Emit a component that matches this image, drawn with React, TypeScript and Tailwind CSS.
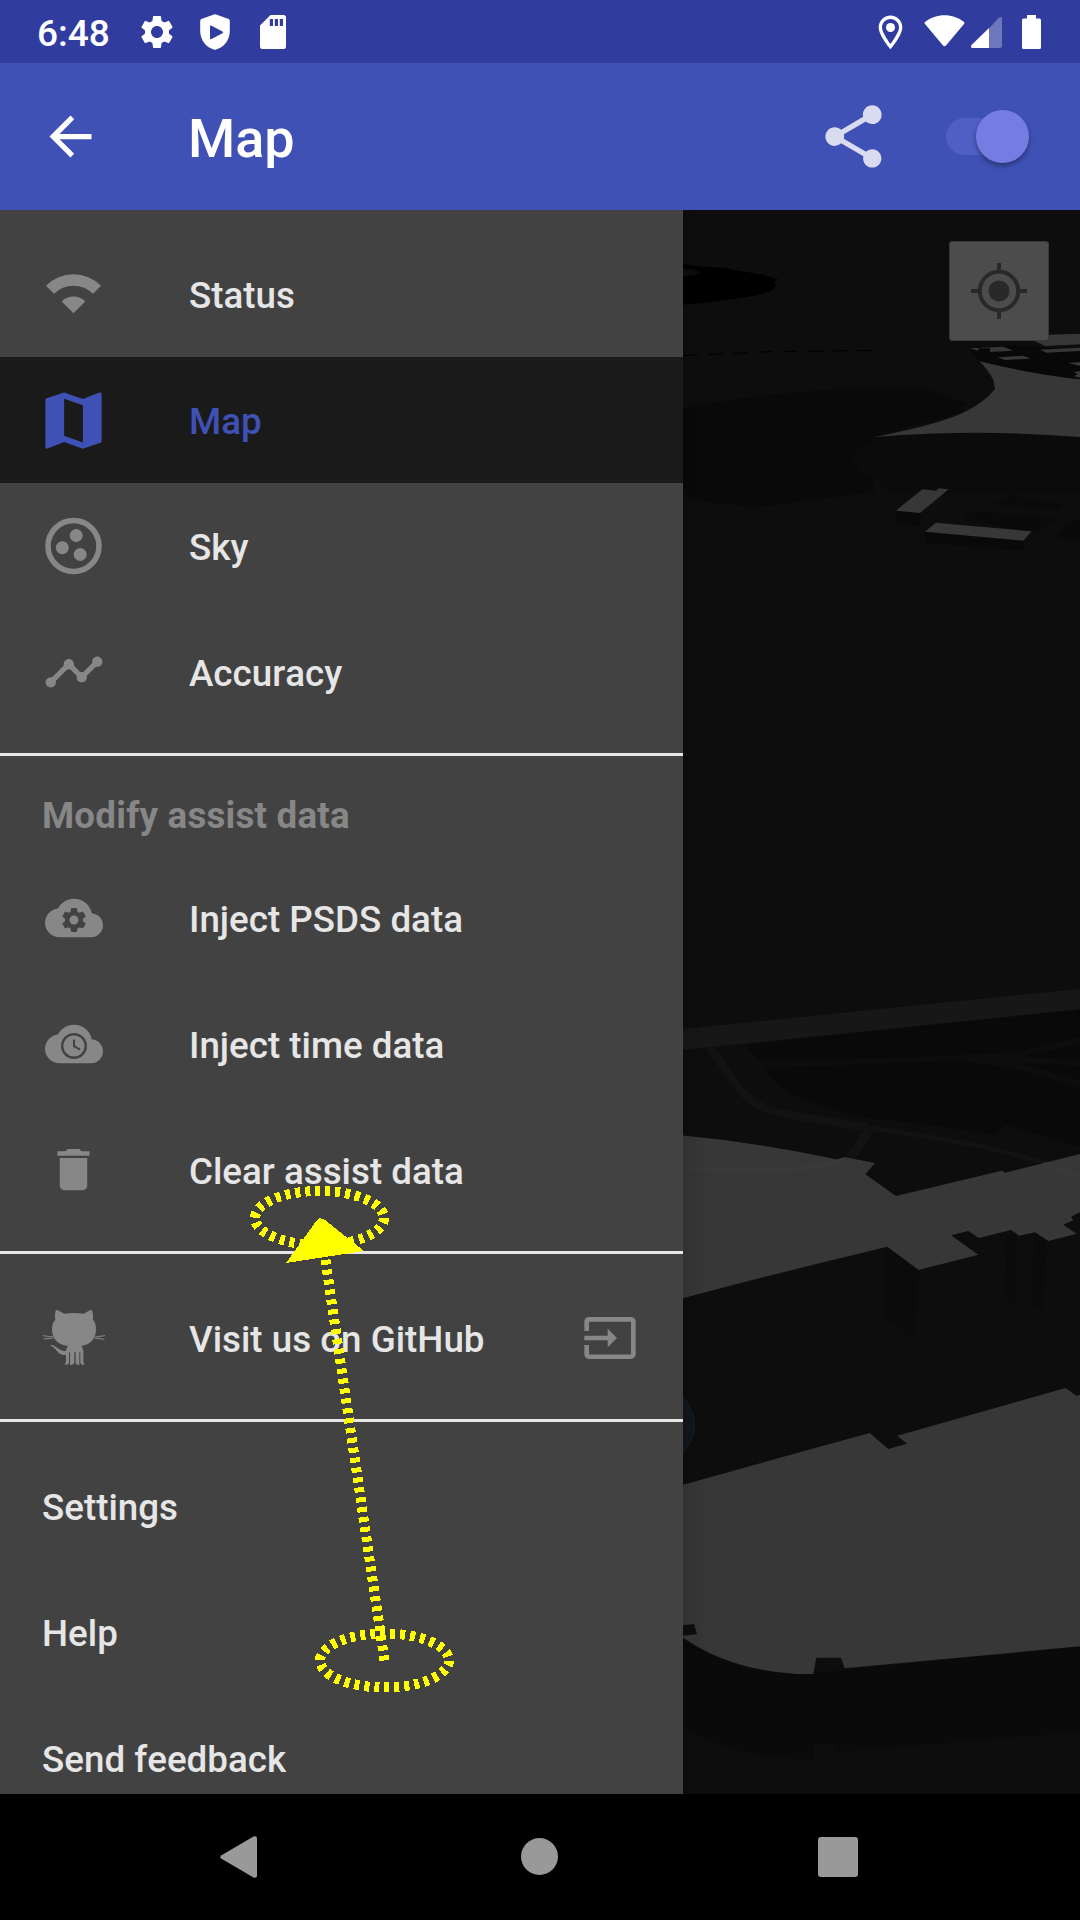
import React from "react";
import { MdArrowBack, MdCloud, MdDelete, MdMap, MdSettings, MdShare, MdTimeline } from "react-icons/md";

function ShieldPlay() {
  return (
    <svg width="30" height="36" viewBox="0 0 30 36" className="fill-white">
      <path
        fillRule="evenodd"
        d="M13.9 .4Q15 -.1 16.100 .4L28.600 5Q29.800 5.500 29.800 7V17C29.800 27 23 33.500 16.200 35.600Q15 36 13.800 35.600C7 33.500 .2 27 .2 17V7Q.2 5.500 1.400 5ZM10 12.200V24.500Q10.300 25.600 11.600 25L22.500 19.200Q23.700 18.300 22.500 17.400L11.600 11.700Q10.300 11.100 10 12.200Z"
      />
    </svg>
  );
}

function SdCard() {
  return (
    <svg width="26" height="34" viewBox="0 0 26 34" className="fill-white">
      <path fillRule="evenodd" d="M10.500 0H23.500Q26 0 26 2.500V31.500Q26 34 23.500 34H2.500Q0 34 0 31.500V10.500ZM9.800 4V11H13V4ZM14.800 4V11H18V4ZM19.800 4V11H23V4Z" />
    </svg>
  );
}

function StatusBar() {
  return (
    <div className="flex h-[63px] shrink-0 items-center bg-[#303d9f] pl-[37px] text-white">
      <span className="w-[100px] pt-[3px] text-[37px] leading-none font-medium">6:48</span>
      <MdSettings className="size-[40px] shrink-0" />
      <span className="ml-[23px]"><ShieldPlay /></span>
      <span className="ml-[30px]"><SdCard /></span>
      <svg width="164" height="36" viewBox="878 13 164 36" className="ml-auto mr-[38px] fill-white">
        <path fillRule="evenodd" d="M890.500 14.600C884 14.600 878.700 19.800 878.700 26.300C878.700 35 890.500 48.300 890.500 48.300S902.300 35 902.300 26.300C902.300 19.800 897 14.600 890.500 14.600ZM890.500 18C895.300 18 899 21.700 899 26.500C899 31.500 890.500 43 890.500 43S882 31.500 882 26.500C882 21.700 885.700 18 890.500 18Z" />
        <circle cx="890.500" cy="26.500" r="4.500" />
        <path d="M924.800 22.800Q924.200 21.700 925 21C936 12 953 12 964 21Q964.800 21.700 964.200 22.800L946 44.600Q944.500 46 943 44.600Z" />
        <path fillOpacity=".3" d="M989 27.500L998.500 17Q1002 14.500 1002 18V45Q1002 47 1000 47H989Z" />
        <path d="M989 27V47H971.500Q970.500 45 971.500 44Z" />
        <path d="M1027 14H1036V17.600H1039.500Q1041 17.600 1041 19.200V46.500Q1041 48 1039.500 48H1023.500Q1022 48 1022 46.500V19.200Q1022 17.600 1023.500 17.600H1027Z" />
      </svg>
    </div>
  );
}

function AppBar() {
  return (
    <header className="flex h-[147px] shrink-0 items-center bg-[#3f51b5] pl-[39px] pr-[51px] text-white">
      <MdArrowBack className="size-[63px] shrink-0" />
      <h1 className="ml-[86px] pt-[5px] text-[54px] leading-none font-medium">Map</h1>
      <MdShare className="ml-auto size-[75px] text-[#d9dcf0]" />
      <div className="ml-[55px] flex h-[37px] w-[83px] items-center justify-end rounded-full bg-[#4f5fc4]">
        <div className="size-[53px] shrink-0 rounded-full bg-[#757de3] shadow-[0_3px_5px_rgba(0,0,0,0.35)]" />
      </div>
    </header>
  );
}

function SignalIcon() {
  return (
    <svg width="63" height="63" className="fill-current">
      <path d="M4 22.700A38.900 38.900 0 0 1 59 22.700L51 30.700A27.600 27.600 0 0 0 12 30.700Z" />
      <path d="M31.500 50.200L19.700 38.400A16.700 16.700 0 0 1 43.300 38.400Z" />
    </svg>
  );
}

function SkyIcon() {
  return (
    <svg width="63" height="63" className="fill-current">
      <circle cx="31.500" cy="31" r="25.500" fill="none" stroke="currentColor" strokeWidth="5.600" />
      <circle cx="34.200" cy="20.500" r="6.500" />
      <circle cx="20.300" cy="32.700" r="6.500" />
      <circle cx="38.200" cy="39.500" r="6.500" />
    </svg>
  );
}

function CloudBadge({ children }: { children: React.ReactNode }) {
  return (
    <div className="grid size-[58px] place-items-center">
      <MdCloud className="col-start-1 row-start-1 size-[58px]" />
      <div className="col-start-1 row-start-1 mt-[3px] text-[#424242]">{children}</div>
    </div>
  );
}

function ClockIcon() {
  return (
    <svg width="28" height="28" viewBox="0 0 28 28" fill="none" stroke="currentColor">
      <circle cx="14" cy="14" r="11.800" strokeWidth="2.400" />
      <path d="M14 7.500V14.200L20 17.700" strokeWidth="2" />
    </svg>
  );
}

function OctocatIcon() {
  return (
    <svg width="80" height="76" viewBox="-4 0 240 228" className="shrink-0 fill-current">
      <path d="M61 30C69 30 78 36 87 41Q116 37 145 41C154 36 163 30 170 30Q175 44 173 59Q182 69 182 87C182 118 165 134 138 138Q144 144 144 154V184Q144 191 148 195Q136 196 135 187V157H132V195Q123 196 121 190V157H117V190Q114 196 104 195V157H101V187Q101 196 87 194Q92 191 92 184V165C65 167 66 144 46 137Q45 134 48 134C67 139 70 153 92 153Q92 144 98 138C67 134 50 118 50 87Q50 69 60 59Q57 44 61 30Z" />
      <path d="M22 107L53 111M25 117L54 114M179 111L209 107M178 114L207 118" fill="none" stroke="currentColor" strokeWidth="3" />
    </svg>
  );
}

function InputIcon() {
  return (
    <svg width="56" height="56" viewBox="0 0 24 24" className="fill-current">
      <path d="M21 3.010H3c-1.100 0-2 .9-2 2V9h2V4.990h18v14.030H3V15H1v4.010c0 1.100.9 1.980 2 1.980h18c1.100 0 2-.88 2-1.980v-14c0-1.110-.9-2-2-2zM11 16l4-4-4-4v3H1v2h10v3z" />
    </svg>
  );
}

type ItemProps = { icon?: React.ReactNode; label: string; active?: boolean; trailing?: React.ReactNode };

function DrawerItem({ icon, label, active, trailing }: ItemProps) {
  return (
    <div className={active ? "flex h-[126px] shrink-0 items-center bg-[#1a1a1a] px-[42px] text-[#3f51b5]" : "flex h-[126px] shrink-0 items-center px-[42px] text-[#878787]"}>
      {icon && (
        <div className="mr-[84px] flex size-[63px] shrink-0 items-center justify-center">{icon}</div>
      )}
      <span className={active ? "pt-[4px] text-[36.750px] leading-none font-medium" : "pt-[4px] text-[36.750px] leading-none font-medium text-[#e6e6e6] [font-kerning:none]"}>{label}</span>
      {trailing && <div className="ml-auto mr-[3px]">{trailing}</div>}
    </div>
  );
}

function Divider() {
  return <div className="mt-[18px] h-[3px] shrink-0 bg-[#e6e6e6]" />;
}

function Drawer() {
  return (
    <nav className="flex w-[683px] shrink-0 flex-col overflow-hidden bg-[#424242] pt-[21px]">
      <DrawerItem icon={<SignalIcon />} label="Status" />
      <DrawerItem icon={<MdMap className="size-[75px] shrink-0" />} label="Map" active />
      <DrawerItem icon={<SkyIcon />} label="Sky" />
      <DrawerItem icon={<MdTimeline className="size-[62px]" />} label="Accuracy" />
      <Divider />
      <div className="flex h-[99px] shrink-0 items-center px-[42px] pt-[22px]">
        <span className="text-[36.750px] leading-none font-bold tracking-[0.2px] text-[#878787]">Modify assist data</span>
      </div>
      <DrawerItem icon={<CloudBadge><MdSettings className="size-[30px]" /></CloudBadge>} label="Inject PSDS data" />
      <DrawerItem icon={<CloudBadge><ClockIcon /></CloudBadge>} label="Inject time data" />
      <DrawerItem icon={<MdDelete className="mb-[2px] size-[55px]" />} label="Clear assist data" />
      <Divider />
      <div className="mt-[21px] shrink-0">
        <DrawerItem icon={<OctocatIcon />} label="Visit us on GitHub" trailing={<InputIcon />} />
      </div>
      <Divider />
      <div className="mt-[21px] shrink-0">
        <DrawerItem label="Settings" />
        <DrawerItem label="Help" />
        <DrawerItem label="Send feedback" />
      </div>
    </nav>
  );
}

function MapView() {
  return (
    <main className="relative flex-1 bg-[#0d0d0d]">
      <svg width="397" height="1584" viewBox="683 210 397 1584" className="block">
        <g transform="translate(680 210) scale(.33333)">
          <path fill="#000" d="M0 160L50 168L130 174L200 186L250 194L294 208L282 220L288 228L275 242L240 254L180 264L120 272L80 278L0 285Z" />
          <path fill="#0d0d0d" d="M0 174L45 180L62 188L40 196L0 201Z" />
          <path fill="none" stroke="#000" strokeWidth="3" strokeDasharray="45 30" d="M9 437L270 425L590 421" />
          <path fill="#090909" d="M0 600C180 555 500 525 740 536L860 580L830 590L860 603L600 675L512 738L545 790L580 805V846L220 893L160 882L115 885L0 850Z" />
          <path fill="#0b0b0b" d="M585 682L900 668L1200 680V850H635L575 795L545 790L530 765L512 738Z" />
          <path fill="#0a0a0a" d="M935 880L1000 857L1150 885L1135 900L930 882ZM850 930L880 903L1125 925L1070 970ZM1200 925L1160 940L1132 980L1200 1000Z" />
          <path fill="#080808" d="M865 412L1040 405L1200 425V508L1070 490L898 455Z" />
          <path fill="#373737" d="M1040 382L1105 374L1200 371V403L1095 408ZM868 415L970 410L1000 422L930 426V415H895V422ZM1080 419L1200 413V423L1100 428ZM953 442L1030 437L1052 446L975 450ZM1165 459L1200 456V468ZM1180 487L1200 483V503L1182 499L1194 491Z" />
          <path fill="#373737" d="M898 454Q1060 493 1200 508V681Q900 656 585 681Q790 640 860 603Q920 570 945 537L940 510Q925 480 898 454Z" />
          <path fill="#090909" d="M648 903L722 908V950L646 938ZM735 965L1030 990V1022L735 998Z" />
          <path fill="#373737" d="M727 838L768 842L776 835L806 838L720 909L648 902ZM767 938L1055 964L1030 992L735 965Z" />
        </g>
        <g transform="translate(680 960) scale(.33333)">
          <path fill="#090909" d="M195 255L1200 148V230L1010 275L700 292L240 302ZM255 325L830 302Q1000 315 1200 386V560L978 495L945 526Q750 490 560 475Q290 415 255 325ZM1020 310L1200 318V360ZM1020 290L1200 254V299Z" />
          <path fill="#171717" d="M0 208L1200 86V148L0 270Z" />
          <path fill="none" stroke="#121212" strokeWidth="24" d="M90 262L175 385Q230 450 330 465L560 502" />
          <path fill="none" stroke="#121212" strokeWidth="13" d="M540 501Q900 545 1100 612" />
          <path fill="none" stroke="#121212" strokeWidth="28" d="M565 505Q540 565 505 594" />
          <path fill="#373737" d="M0 526Q240 548 483 601L493 591L585 609L556 643L648 708L965 632L975 638L1200 582V757L1173 770L1180 781L1150 794L1190 821L1105 843L1065 817L1018 827L993 810L897 834L865 813L813 826L895 884L715 930L622 860Q300 937 0 1017Z" />
          <path fill="none" stroke="#393939" strokeWidth="14" d="M0 628H270Q430 627 492 598M1090 612L1200 652" />
          <path fill="#0b0b0b" d="M622 862L715 930L705 1140L612 1075ZM980 820L1010 828L1003 1030L977 1018ZM1065 820L1100 842L1090 1052L1055 1030Z" />
        </g>
        <g transform="translate(680 1360) scale(.33333)">
          <circle cx="-70" cy="195" r="114" fill="#12171b" stroke="#10202e" strokeWidth="3" />
          <path fill="#0a0a0a" d="M0 830L400 940L1200 860V1115L470 1175V1150H400V1198Q180 1200 0 1100Z" />
          <path fill="#373737" d="M0 377Q280 298 569 219L625 267L681 251L652 227L1157 84L1189 107L1200 105V859L494 925L483 893H409L400 942H350Q150 930 9 833V827L51 823L42 793L0 796Z" />
        </g>
      </svg>
      <div className="absolute top-0 left-0 h-full w-[26px] bg-gradient-to-r from-black/10 to-transparent" />
      <button className="absolute top-[31px] right-[31px] grid size-[100px] place-items-center rounded-[4px] bg-[#4c4c4c] shadow-[0_0_0_1px_#383838_inset]">
        <svg width="60" height="60" fill="none" stroke="#292929" strokeWidth="4">
          <circle cx="30" cy="30" r="19.200" />
          <path d="M30 2V11M30 49V58M2 30H11M49 30H58" />
          <circle cx="30" cy="30" r="10.500" fill="#292929" stroke="none" />
        </svg>
      </button>
    </main>
  );
}

function NavBar() {
  return (
    <div className="flex h-[126px] shrink-0 items-center bg-black pb-[1px] pl-[220px]">
      <svg width="37" height="42" viewBox="0 0 37 42" className="fill-[#999999]">
        <path d="M1.500 19.200L33.500 .5Q37 -.7 37 2.500V39.500Q37 42.700 33.500 41.500L1.500 22.800Q-1 21 1.500 19.200Z" />
      </svg>
      <div className="ml-[264px] size-[37px] rounded-full bg-[#999999]" />
      <div className="ml-[260px] size-[40px] rounded-[3px] bg-[#999999]" />
    </div>
  );
}

/* Swipe gesture marker drawn over the whole screen. */
function GestureOverlay() {
  return (
    <svg width="1080" height="1920" viewBox="0 0 1080 1920" shapeRendering="crispEdges" className="pointer-events-none absolute top-0 left-0">
      <g fill="none" stroke="#ffff00" strokeWidth="10" strokeDasharray="5 5">
        <ellipse cx="319.500" cy="1218" rx="64.500" ry="27" />
        <ellipse cx="384.500" cy="1660.500" rx="64.500" ry="27" />
        <path d="M384.500 1660.500L325 1257" />
      </g>
      <path fill="#ffff00" d="M317 1220L320 1218L325 1220L364 1251L286 1263Z" />
    </svg>
  );
}

export default function App() {
  return (
    <div className="relative flex h-[1920px] w-[1080px] flex-col overflow-hidden bg-black font-[Roboto,sans-serif]">
      <StatusBar />
      <AppBar />
      <div className="flex h-[1584px] shrink-0">
        <Drawer />
        <MapView />
      </div>
      <NavBar />
      <GestureOverlay />
    </div>
  );
}
